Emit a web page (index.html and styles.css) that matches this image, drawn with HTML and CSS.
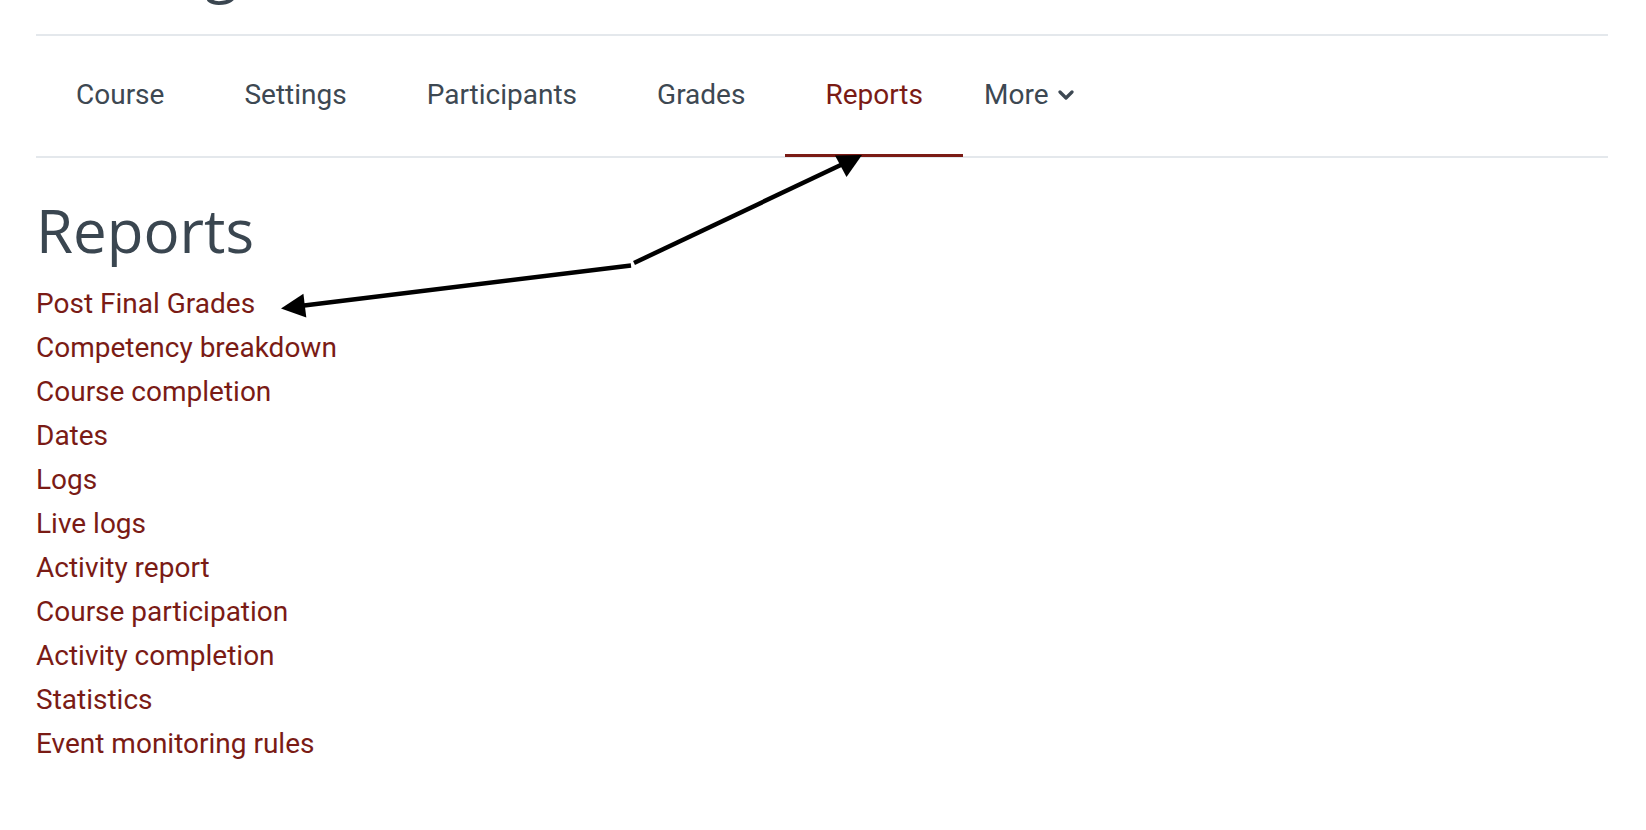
FILE: index.html
```html
<!DOCTYPE html>
<html lang="en">
<head>
<meta charset="utf-8">
<title>Reports</title>
<link rel="stylesheet" href="styles.css">
</head>
<body>
<div class="page">
  <h1 class="course-title">Testing</h1>
  <nav class="secondary-nav">
    <a class="nav-item" href="#">Course</a>
    <a class="nav-item" href="#">Settings</a>
    <a class="nav-item" href="#">Participants</a>
    <a class="nav-item" href="#">Grades</a>
    <a class="nav-item active" href="#">Reports</a>
    <a class="nav-item more" href="#">More
      <svg class="chevron" width="16" height="10" viewBox="0 0 16 10"><path d="M2 2 L8 8 L14 2" fill="none" stroke="currentColor" stroke-width="3.2" stroke-linecap="round" stroke-linejoin="round"/></svg>
    </a>
  </nav>
  <h2 class="page-heading">Reports</h2>
  <ul class="report-list">
    <li><a href="#">Post Final Grades</a></li>
    <li><a href="#">Competency breakdown</a></li>
    <li><a href="#">Course completion</a></li>
    <li><a href="#">Dates</a></li>
    <li><a href="#">Logs</a></li>
    <li><a href="#">Live logs</a></li>
    <li><a href="#">Activity report</a></li>
    <li><a href="#">Course participation</a></li>
    <li><a href="#">Activity completion</a></li>
    <li><a href="#">Statistics</a></li>
    <li><a href="#">Event monitoring rules</a></li>
  </ul>
</div>
<svg class="annotation" width="1646" height="830" viewBox="0 0 1646 830">
  <line x1="631" y1="265.5" x2="300" y2="306" stroke="#000" stroke-width="4.5"/>
  <polygon points="281,308.5 306.3,317.5 303.4,293.7" fill="#000"/>
  <line x1="634" y1="263" x2="845" y2="163" stroke="#000" stroke-width="4.5"/>
  <polygon points="862,155 846.5,177 835,155.5" fill="#000"/>
</svg>
</body>
</html>
```

FILE: styles.css
```css
html, body {
  margin: 0;
  padding: 0;
  background: #ffffff;
  overflow: hidden;
}

body {
  font-family: Roboto, "Liberation Sans", Arial, sans-serif;
  position: relative;
  width: 1646px;
  height: 830px;
}

.page {
  padding: 0 38px 0 36px;
}

.course-title {
  font-family: "Open Sans", "Liberation Sans", sans-serif;
  font-weight: 400;
  font-size: 60px;
  line-height: 72px;
  color: #3a4650;
  margin: -68px 0 30px 0;
}

.secondary-nav {
  display: flex;
  align-items: center;
  height: 120px;
  border-top: 2px solid #e4e8ec;
  border-bottom: 2px solid #e4e8ec;
}

.nav-item {
  position: relative;
  display: flex;
  align-items: center;
  box-sizing: border-box;
  height: 100%;
  padding: 0 40px 4px 40px;
  font-size: 28px;
  color: #3d4852;
  text-decoration: none;
}

.nav-item.active {
  color: #7a1b15;
}

.nav-item.active::after {
  content: "";
  position: absolute;
  left: 0;
  right: 0;
  bottom: -1px;
  height: 3px;
  background: #7a1b15;
}

.nav-item.more {
  padding-left: 21px;
  gap: 10px;
}

.chevron {
  display: block;
  margin-top: 2px;
}

.page-heading {
  font-family: "Open Sans", "Liberation Sans", sans-serif;
  font-weight: 400;
  font-size: 60px;
  line-height: 72px;
  color: #3a4650;
  margin: 36px 0 0 0;
}

.report-list {
  list-style: none;
  margin: 16px 0 0 0;
  padding: 0;
}

.report-list li {
  font-size: 28px;
  line-height: 44px;
}

.report-list a {
  color: #7a1b15;
  text-decoration: none;
}

.annotation {
  position: absolute;
  left: 0;
  top: 0;
  pointer-events: none;
}
```
